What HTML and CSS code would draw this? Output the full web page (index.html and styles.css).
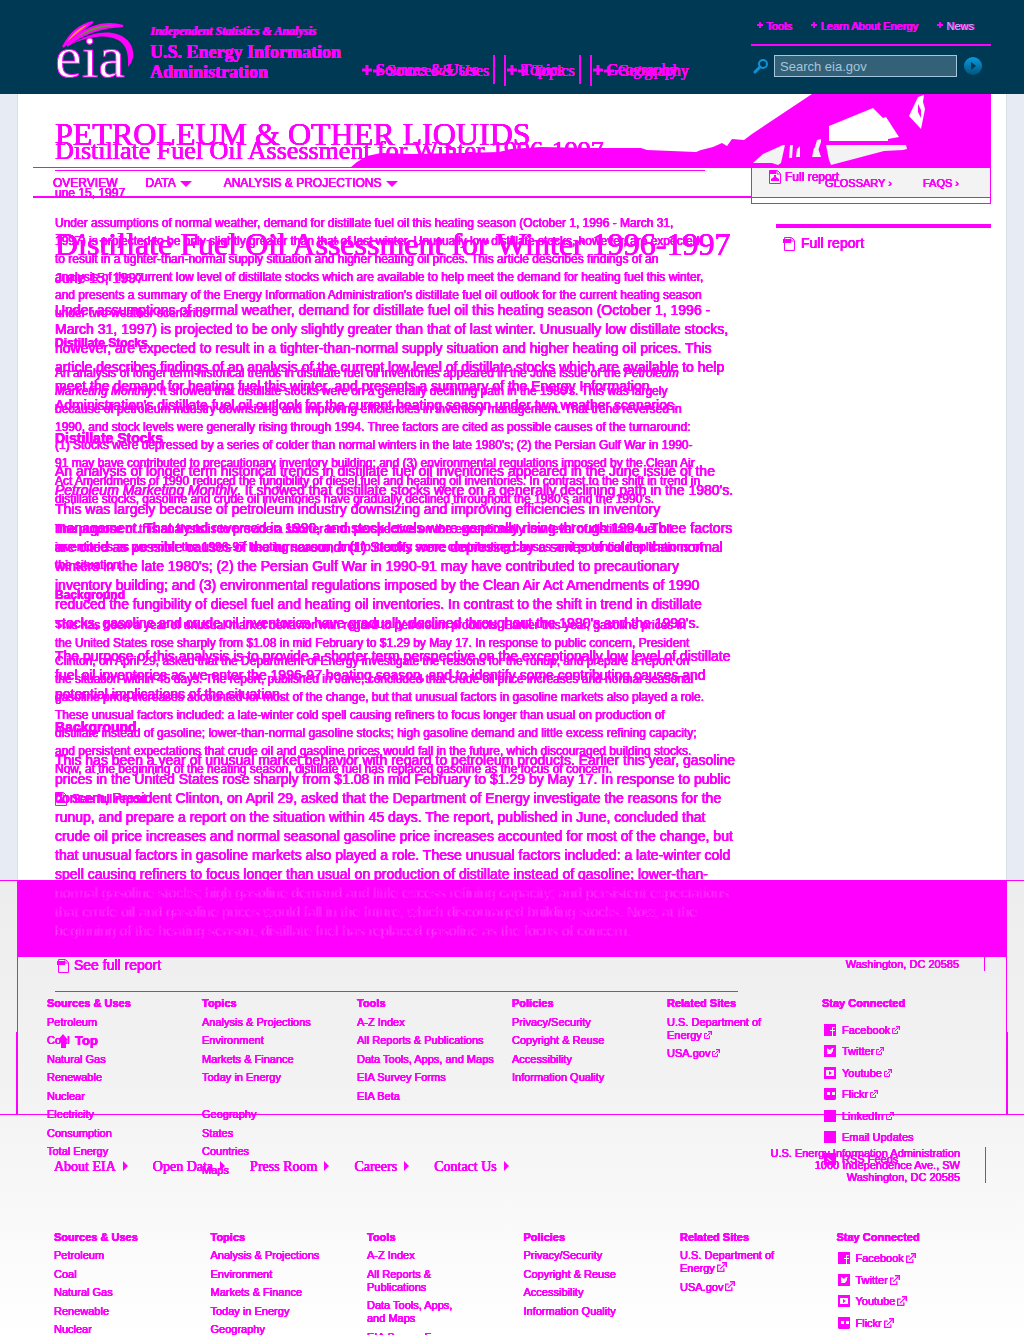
FILE: index.html
```html
<!DOCTYPE html>
<html lang="en">
<head>
<meta charset="utf-8">
<title>Distillate Fuel Oil Assessment for Winter 1996-1997</title>
<link rel="stylesheet" href="styles.css">
</head>
<body>
<svg class="sprite" aria-hidden="true">
  <symbol id="plus" viewBox="0 0 10 10"><path d="M3.500 0h3v3.500H10v3H6.500V10h-3V6.500H0v-3h3.500z"/></symbol>
  <symbol id="doc" viewBox="0 0 12 14"><path d="M1.500 .5h7l3 3v10h-10zM8 1v3h3" fill="none" stroke="currentColor"/><path d="M0 2h8v4H0z"/></symbol>
  <symbol id="pdf" viewBox="0 0 12 14"><path d="M.5 .5h8l3 3v10H.5zM8 1v3h3" fill="none" stroke="currentColor"/><path d="M1 1h6v3H1zM2 11V9l3-2V5h2v2l3 2v2z"/></symbol>
  <symbol id="ext" viewBox="0 0 8 8"><path d="M3 2.500H.5v5h5V5M2.500 5.500L6.500 1.500" fill="none" stroke="currentColor"/><path d="M4 0h4v4H6.800V1.200H4z"/></symbol>
  <symbol id="fb" viewBox="0 0 12 12"><path d="M0 0h12v12H9V7h2V6H9V4h2V3H8v3H6v1h2v5H0z"/></symbol>
  <symbol id="tw" viewBox="0 0 12 12"><path fill-rule="evenodd" d="M0 0h12v12H0zM3 3v4l1 1H3v1h4l2-3V4l1-1H8L6 5z"/></symbol>
  <symbol id="yt" viewBox="0 0 12 12"><path fill-rule="evenodd" d="M0 0h12v12H0zM2 3v6h8V3z"/><path d="M5 4l3 2-3 2z"/></symbol>
  <symbol id="fl" viewBox="0 0 12 12"><path fill-rule="evenodd" d="M0 0h12v11l-1 1H1l-1-1zM3 4v3h3V4zM8 4v3h3V4z"/></symbol>
  <symbol id="li" viewBox="0 0 12 12"><path d="M0 0h12v12H0z"/></symbol>
  <symbol id="rss" viewBox="0 0 12 12"><path fill-rule="evenodd" d="M0 0h12v12H0zM3 4v1l4 4h1V8zM3 8v1h1V8z"/></symbol>
</svg>

<div class="stage">
  <div class="backdrop" aria-hidden="true">
    <div class="bd-header"></div>
    <div class="bd-page"><div class="bd-sheet"></div></div>
    <div class="bd-band"></div>
    <div class="bd-foot"><div class="bd-foot-line"></div><div class="bd-foot-edge"></div></div>
    <div class="bd-end"></div>
  </div>

  <div class="layer">
    <header class="top">
      <a class="brand" href="#">
        <svg class="logo" viewBox="0 0 80 60" role="img" aria-label="eia">
          <path d="M8 25C14 13 24 3 38 0C27 8 18 15 8 25z" fill="#ff9a2e" stroke="#f0f" stroke-width="2"/>
          <path d="M12 24C26 7 46-2 68 4C46 5 28 11 12 24z" fill="#5d9732" stroke="#f0f" stroke-width="2"/>
          <path d="M13 24C30 13 46 9 57 11C72 13 80 24 78 36Q77 41 73 45C74 28 70 18 54 15C42 13 26 17 13 24z" fill="#f0f"/>
          <text x="0" y="55" class="logo-word">eia</text>
        </svg>
        <span class="brand-text"><em>Independent Statistics &amp; Analysis</em><strong>U.S. Energy Information<br>Administration</strong></span>
      </a>
      <nav class="mainnav first">
        <a href="#"><svg><use href="#plus"/></svg>Sources &amp; Uses</a>
        <a href="#"><svg><use href="#plus"/></svg>Topics</a>
        <a href="#"><svg><use href="#plus"/></svg>Geography</a>
      </nav>
      <div class="utility">
        <nav class="tools">
          <a href="#"><svg><use href="#plus"/></svg>Tools</a>
          <a href="#"><svg><use href="#plus"/></svg>Learn About Energy</a>
          <a class="pale" href="#"><svg><use href="#plus"/></svg>News</a>
        </nav>
        <form class="search">
          <svg class="lens" viewBox="0 0 16 16"><circle cx="10" cy="6" r="4" fill="none" stroke="#0f93d6" stroke-width="2"/><path d="M7 9l-5 5" stroke="#0f93d6" stroke-width="3" stroke-linecap="round"/></svg>
          <input type="text" placeholder="Search eia.gov" aria-label="Search eia.gov">
          <button type="button" aria-label="Search"><svg viewBox="0 0 18 18"><path d="M7 5l5 4-5 4z" fill="#003953"/></svg></button>
        </form>
      </div>
    </header>
    <div class="columns small">
      <main>
        <h1>Distillate Fuel Oil Assessment for Winter 1996-1997</h1>
        <div class="date">une 15, 1997</div>
        <p>Under assumptions of normal weather, demand for distillate fuel oil this heating season (October 1, 1996 - March 31,<br>1997) is projected to be only slightly greater than that of last winter. Unusually low distillate stocks, however, are expected<br>to result in a tighter-than-normal supply situation and higher heating oil prices. This article describes findings of an<br>analysis of the current low level of distillate stocks which are available to help meet the demand for heating fuel this winter,<br>and presents a summary of the Energy Information Administration's distillate fuel oil outlook for the current heating season<br>under two weather scenarios</p>
        <h2>Distillate Stocks</h2>
        <p>An analysis of longer term historical trends in distillate fuel oil inventories appeared in the June issue of the <i>Petroleum<br>Marketing Monthly</i>. It showed that distillate stocks were on a generally declining path in the 1980's. This was largely<br>because of petroleum industry downsizing and improving efficiencies in inventory management. That trend reversed in<br>1990, and stock levels were generally rising through 1994. Three factors are cited as possible causes of the turnaround:<br>(1) Stocks were depressed by a series of colder than normal winters in the late 1980's; (2) the Persian Gulf War in 1990-<br>91 may have contributed to precautionary inventory building; and (3) environmental regulations imposed by the Clean Air<br>Act Amendments of 1990 reduced the fungibility of diesel fuel and heating oil inventories. In contrast to the shift in trend in<br>distillate stocks, gasoline and crude oil inventories have gradually declined throughout the 1980's and the 1990's.</p>
        <p>The purpose of this analysis is to provide a shorter term perspective on the exceptionally low level of distillate fuel oil<br>inventories as we enter the 1996-97 heating season, and to identify some contributing causes and potential implications of<br>the situation.</p>
        <h2>Background</h2>
        <p>This has been a year of unusual market behavior with regard to petroleum products. Earlier this year, gasoline prices in<br>the United States rose sharply from $1.08 in mid February to $1.29 by May 17. In response to public concern, President<br>Clinton, on April 29, asked that the Department of Energy investigate the reasons for the runup, and prepare a report on<br>the situation within 45 days. The report, published in June, concluded that crude oil price increases and normal seasonal<br>gasoline price increases accounted for most of the change, but that unusual factors in gasoline markets also played a role.<br>These unusual factors included: a late-winter cold spell causing refiners to focus longer than usual on production of<br>distillate instead of gasoline; lower-than-normal gasoline stocks; high gasoline demand and little excess refining capacity;<br>and persistent expectations that crude oil and gasoline prices would fall in the future, which discouraged building stocks.<br>Now, at the beginning of the heating season, distillate fuel has replaced gasoline as the focus of concern.</p>
        <a class="report" href="#"><svg><use href="#pdf"/></svg>See full report</a>
      </main>
      <aside>
        <div class="panel"><a class="report" href="#"><svg><use href="#pdf"/></svg>Full report</a></div>
        <div class="panel-foot"></div>
      </aside>
    </div>
    <footer class="foot first">
      <address class="short">Washington, DC 20585</address>
      <div class="links">
        <section><h3>Sources &amp; Uses</h3><ul><li><a href="#">Petroleum</a></li><li><a href="#">Coal</a></li><li><a href="#">Natural Gas</a></li><li><a href="#">Renewable</a></li><li><a href="#">Nuclear</a></li><li><a href="#">Electricity</a></li><li><a href="#">Consumption</a></li><li><a href="#">Total Energy</a></li></ul></section>
        <section><h3>Topics</h3><ul><li><a href="#">Analysis &amp; Projections</a></li><li><a href="#">Environment</a></li><li><a href="#">Markets &amp; Finance</a></li><li><a href="#">Today in Energy</a></li><li>&nbsp;</li><li><a href="#">Geography</a></li><li><a href="#">States</a></li><li><a href="#">Countries</a></li><li><a href="#">Maps</a></li></ul></section>
        <section><h3>Tools</h3><ul><li><a href="#">A-Z Index</a></li><li><a href="#">All Reports &amp; Publications</a></li><li><a href="#">Data Tools, Apps, and Maps</a></li><li><a href="#">EIA Survey Forms</a></li><li><a href="#">EIA Beta</a></li></ul></section>
        <section><h3>Policies</h3><ul><li><a href="#">Privacy/Security</a></li><li><a href="#">Copyright &amp; Reuse</a></li><li><a href="#">Accessibility</a></li><li><a href="#">Information Quality</a></li></ul></section>
        <section><h3>Related Sites</h3><ul><li><a href="#">U.S. Department of<br>Energy<svg class="ext"><use href="#ext"/></svg></a></li><li><a href="#">USA.gov<svg class="ext"><use href="#ext"/></svg></a></li></ul></section>
        <section><h3>Stay Connected</h3><ul class="social">
          <li><a href="#"><svg><use href="#fb"/></svg>Facebook<svg class="ext"><use href="#ext"/></svg></a></li>
          <li><a href="#"><svg><use href="#tw"/></svg>Twitter<svg class="ext"><use href="#ext"/></svg></a></li>
          <li><a href="#"><svg><use href="#yt"/></svg>Youtube<svg class="ext"><use href="#ext"/></svg></a></li>
          <li><a href="#"><svg><use href="#fl"/></svg>Flickr<svg class="ext"><use href="#ext"/></svg></a></li>
          <li><a href="#"><svg><use href="#li"/></svg>LinkedIn<svg class="ext"><use href="#ext"/></svg></a></li>
          <li><a href="#"><svg><use href="#li"/></svg>Email Updates</a></li>
          <li><a href="#"><svg><use href="#rss"/></svg>RSS Feeds</a></li>
        </ul></section>
      </div>
    </footer>
  </div>

  <div class="layer">
    <header class="top">
      <nav class="mainnav second">
        <a href="#"><svg><use href="#plus"/></svg>Sources &amp; Uses</a>
        <a href="#"><svg><use href="#plus"/></svg>Topics</a>
        <a href="#"><svg><use href="#plus"/></svg>Geography</a>
      </nav>
    </header>
    <div class="hero">
      <svg class="skyline" viewBox="0 0 640 73" aria-hidden="true">
        <path fill-rule="evenodd" d="M0 73L6 68L16 62L30 59L60 60L110 59L148 58L160 55L190 53L238 54L290 54L296 56L345 58L350 56L362 53L371 49L376 52L381 45L393 46L401 40L461 0H640V73z
        M478 32V47H537V45L548 43L535 23L532 24L522 14z"/>
        <g fill="#f3f3f3">
          <path d="M475 51H555L556 55L552 56L533 57L480 71L478 66z"/>
          <path d="M402 69L412 60L432 51H434L430 69L427 71L421 69z"/>
          <path d="M439 51h3l-1 13h-3zM446 55l3-3v11h-4zM466 46l4-1v3l-5 15h-4zM463 54h4l3 9h-9z"/>
        </g>
        <path d="M558 22L567 3L573 1L572 8L574 15L570 35z" fill="#fff"/>
        <path d="M567 10l3 6v8l-3-6z"/>
      </svg>
      <div class="hero-title">PETROLEUM &amp; OTHER LIQUIDS</div>
    </div>
    <nav class="subnav">
      <div class="subnav-main"><a href="#">OVERVIEW</a><a href="#">DATA<i class="caret"></i></a><a href="#">ANALYSIS &amp; PROJECTIONS<i class="caret"></i></a></div>
      <div class="subnav-side"><a href="#">GLOSSARY ›</a><a href="#">FAQS ›</a></div>
    </nav>
    <div class="columns large">
      <main>
        <h1>Distillate Fuel Oil Assessment for Winter 1996-1997</h1>
        <div class="date">June 15, 1997</div>
        <p>Under assumptions of normal weather, demand for distillate fuel oil this heating season (October 1, 1996 -<br>March 31, 1997) is projected to be only slightly greater than that of last winter. Unusually low distillate stocks,<br>however, are expected to result in a tighter-than-normal supply situation and higher heating oil prices. This<br>article describes findings of an analysis of the current low level of distillate stocks which are available to help<br>meet the demand for heating fuel this winter, and presents a summary of the Energy Information<br>Administration's distillate fuel oil outlook for the current heating season under two weather scenarios.</p>
        <h2>Distillate Stocks</h2>
        <p>An analysis of longer term historical trends in distillate fuel oil inventories appeared in the June issue of the<br><i>Petroleum Marketing Monthly</i>. It showed that distillate stocks were on a generally declining path in the 1980's.<br>This was largely because of petroleum industry downsizing and improving efficiencies in inventory<br>management. That trend reversed in 1990, and stock levels were generally rising through 1994. Three factors<br>are cited as possible causes of the turnaround: (1) Stocks were depressed by a series of colder than normal<br>winters in the late 1980's; (2) the Persian Gulf War in 1990-91 may have contributed to precautionary<br>inventory building; and (3) environmental regulations imposed by the Clean Air Act Amendments of 1990<br>reduced the fungibility of diesel fuel and heating oil inventories. In contrast to the shift in trend in distillate<br>stocks, gasoline and crude oil inventories have gradually declined throughout the 1980's and the 1990's.</p>
        <p>The purpose of this analysis is to provide a shorter term perspective on the exceptionally low level of distillate<br>fuel oil inventories as we enter the 1996-97 heating season, and to identify some contributing causes and<br>potential implications of the situation.</p>
        <h2>Background</h2>
        <p>This has been a year of unusual market behavior with regard to petroleum products. Earlier this year, gasoline<br>prices in the United States rose sharply from $1.08 in mid February to $1.29 by May 17. In response to public<br>concern, President Clinton, on April 29, asked that the Department of Energy investigate the reasons for the<br>runup, and prepare a report on the situation within 45 days. The report, published in June, concluded that<br>crude oil price increases and normal seasonal gasoline price increases accounted for most of the change, but<br>that unusual factors in gasoline markets also played a role. These unusual factors included: a late-winter cold<br>spell causing refiners to focus longer than usual on production of distillate instead of gasoline; lower-than-<br><span class="faint">normal gasoline stocks; high gasoline demand and little excess refining capacity; and persistent expectations<br>that crude oil and gasoline prices would fall in the future, which discouraged building stocks. Now, at the<br>beginning of the heating season, distillate fuel has replaced gasoline as the focus of concern.</span></p>
        <a class="report" href="#"><svg><use href="#doc"/></svg>See full report</a>
        <a class="to-top" href="#"><svg viewBox="0 0 10 14"><path d="M5 0l5 6H8v8H3V6H0z"/></svg>Top</a>
      </main>
      <aside><a class="report" href="#"><svg><use href="#doc"/></svg>Full report</a></aside>
    </div>
    <footer class="foot second">
      <div class="foot-bar">
        <nav class="foot-nav"><a href="#">About EIA</a><a href="#">Open Data</a><a href="#">Press Room</a><a href="#">Careers</a><a href="#">Contact Us</a></nav>
        <address>U.S. Energy Information Administration<br>1000 Independence Ave., SW<br>Washington, DC 20585</address>
      </div>
      <div class="links">
        <section><h3>Sources &amp; Uses</h3><ul><li><a href="#">Petroleum</a></li><li><a href="#">Coal</a></li><li><a href="#">Natural Gas</a></li><li><a href="#">Renewable</a></li><li><a href="#">Nuclear</a></li></ul></section>
        <section><h3>Topics</h3><ul><li><a href="#">Analysis &amp; Projections</a></li><li><a href="#">Environment</a></li><li><a href="#">Markets &amp; Finance</a></li><li><a href="#">Today in Energy</a></li><li><a href="#">Geography</a></li></ul></section>
        <section><h3>Tools</h3><ul><li><a href="#">A-Z Index</a></li><li><a href="#">All Reports &amp;<br>Publications</a></li><li><a href="#">Data Tools, Apps,<br>and Maps</a></li><li><a href="#">EIA Survey Forms</a></li></ul></section>
        <section><h3>Policies</h3><ul><li><a href="#">Privacy/Security</a></li><li><a href="#">Copyright &amp; Reuse</a></li><li><a href="#">Accessibility</a></li><li><a href="#">Information Quality</a></li></ul></section>
        <section><h3>Related Sites</h3><ul><li><a href="#">U.S. Department of<br>Energy<svg class="ext"><use href="#ext"/></svg></a></li><li><a href="#">USA.gov<svg class="ext"><use href="#ext"/></svg></a></li></ul></section>
        <section><h3>Stay Connected</h3><ul class="social">
          <li><a href="#"><svg><use href="#fb"/></svg>Facebook<svg class="ext"><use href="#ext"/></svg></a></li>
          <li><a href="#"><svg><use href="#tw"/></svg>Twitter<svg class="ext"><use href="#ext"/></svg></a></li>
          <li><a href="#"><svg><use href="#yt"/></svg>Youtube<svg class="ext"><use href="#ext"/></svg></a></li>
          <li><a href="#"><svg><use href="#fl"/></svg>Flickr<svg class="ext"><use href="#ext"/></svg></a></li>
        </ul></section>
      </div>
    </footer>
  </div>
</div>
</body>
</html>
```
FILE: styles.css
```css
* { box-sizing: border-box; }
body {
  margin: 0;
  color: #f0f;
  font-family: "Liberation Sans", Arial, sans-serif;
  background: #fff;
}
a { color: inherit; text-decoration: none; }
h1, h2, h3, p, ul { margin: 0; padding: 0; }
ul { list-style: none; }
address { font-style: normal; }
svg { fill: currentColor; flex: none; }
.sprite { display: none; }

/* Two page versions share one grid cell above the backdrop */
.stage { display: grid; height: 100vh; overflow: hidden; }
.layer, .backdrop { grid-area: 1 / 1; min-width: 0; text-shadow: 0 0 0 #f0f, 0 0 0 #f0f, 0 0 0 #f0f, 0 0 0 #f0f; }

.backdrop { display: flex; flex-direction: column; height: 100vh; background: linear-gradient(#ededed 880px, #f3f3f3 1100px, #fff 1335px); }
.bd-header { height: 94px; background: #003953; }
.bd-page { height: 787px; padding: 0 17px; background: #e7ebf4; border-bottom: 1px solid #f0f; }
.bd-sheet { height: 100%; background: #fff; border: 1px solid #d9dfe2; border-width: 0 1px; }
.bd-band { height: 76px; margin: 0 17px; background: #f0f; }
.bd-foot { margin: 0 16px; height: 157px; }
.bd-foot-line { height: 75px; margin: 0 1px; border: solid #f0f; border-width: 0 1px; }
.bd-foot-edge { height: 82px; border: solid #f0f; border-width: 0 2px; }
.bd-end { border-top: 1px solid #f0f; }

/* Header */
.top { display: flex; height: 94px; padding-right: 33px; }
.brand { display: flex; width: 362px; padding: 22px 0 0 55px; }
.logo { width: 80px; height: 60px; margin-right: 15px; overflow: visible; }
.logo-word { font: 60px "Liberation Serif", serif; fill: #fff; stroke: #f0f; text-shadow: none; }
.brand-text { font-family: "Liberation Serif", serif; white-space: nowrap; }
.brand-text em { display: block; font-size: 12px; line-height: 18px; font-weight: bold; text-shadow: 1px 0 #f0f; }
.brand-text strong { display: block; font-size: 18px; line-height: 20px; margin-top: 2px; }
.mainnav { display: flex; align-items: flex-start; padding-top: 55px; font: 16px/30px "Liberation Serif", serif; white-space: nowrap; }
.mainnav svg { width: 10px; height: 10px; margin-right: 4px; }
.mainnav a { padding: 0 15px 0 12px; height: 29px; border-right: 2px solid #f0f; }
.mainnav a:first-child { padding-left: 0; }
.mainnav a:last-child { border: 0; }
.mainnav.second { padding-left: 373px; line-height: 32px; }
.mainnav.second a { height: 31px; }
.utility { width: 240px; margin-left: auto; padding-top: 19px; }
.tools { display: flex; justify-content: space-between; padding: 0 17px 11px 6px; border-bottom: 2px solid #f0f; font-size: 11px; line-height: 14px; text-shadow: 0 0 0 #f0f, 1px 0 #f0f; }
.tools svg { width: 6px; height: 6px; margin: 0 3px 2px 0; }
.tools .pale { color: #a5c6dc; }
.tools .pale svg { color: #f0f; }
.search { display: flex; align-items: center; margin-top: 9px; text-shadow: none; }
.lens { width: 16px; height: 16px; margin: 0 5px 0 2px; }
.search input { width: 183px; height: 22px; padding: 0 5px; border: 1px solid #a5c6dc; background: #336178; color: #fff; font: 13px "Liberation Sans", Arial, sans-serif; }
.search input::placeholder { color: #a5c6dc; opacity: 1; }
.search button { width: 18px; height: 18px; margin-left: 7px; padding: 0; border: 0; border-radius: 9px; background: linear-gradient(#0a9be0, #00557d); }
.search button svg { display: block; width: 18px; height: 18px; }

/* Banner and section menu */
.hero { display: grid; height: 74px; margin: 0 33px; border-bottom: 1px solid #f0f; }
.hero > * { grid-area: 1 / 1; }
.skyline { width: 640px; height: 73px; justify-self: end; }
.hero-title { padding: 22px 0 0 22px; font: 32px/36px "Liberation Serif", serif; white-space: nowrap; }
.subnav { display: flex; margin: 0 33px; height: 30px; font-size: 12px; line-height: 30px; }
.subnav-main { flex: 1; display: flex; gap: 28px; padding-left: 20px; border-bottom: 2px solid #f0f; }
.subnav-main a:last-child { padding-left: 4px; }
.caret { display: inline-block; margin-left: 4px; border: 6px solid transparent; border-top-color: #f0f; border-bottom: 0; }
.subnav-side { width: 240px; display: flex; justify-content: flex-end; gap: 31px; padding-right: 32px; font-size: 11px; }

/* Article columns */
.columns { display: grid; justify-content: space-between; padding: 0 33px 0 55px; }
.columns main { white-space: nowrap; }
.columns h1 { font-family: "Liberation Serif", serif; font-weight: normal; }
.report { display: flex; align-items: center; gap: 6px; }
.report svg { width: 12px; height: 14px; }

.small { grid-template-columns: minmax(0, 650px) 240px; font-size: 12px; line-height: 18px; }
.small h1 { margin-top: 42px; padding-bottom: 4px; font-size: 26px; line-height: 30px; border-bottom: 1px solid #f0f; }
.small .date { margin-top: 13px; }
.small h2 { font-size: 12px; }
.small h2, .small p, .small main .report { margin-top: 12px; }
.small main .report { gap: 5px; }
.panel { height: 54px; margin-top: 50px; padding: 24px 0 0 17px; background: #f3f3f3; border: 1px solid #f0f; border-top: 0; }
.panel .report { gap: 4px; }
.panel-foot { height: 6px; border: 1px solid #f0f; border-top: 0; }

.large { grid-template-columns: minmax(0, 683px) 215px; font-size: 14px; line-height: 19px; }
.large h1 { margin-top: 28px; font-size: 32px; line-height: 36px; }
.large .date { margin: 7px 0 13px; }
.large h2 { font-size: 14px; }
.large h2, .large p { margin-bottom: 14px; }
.large main .report { margin-top: 15px; padding-bottom: 16px; border-bottom: 1px solid #f0f; gap: 5px; padding-left: 2px; }
.faint { color: #fff; text-shadow: none; -webkit-text-stroke: 1px #f0f; }
.large aside { padding-top: 26px; }
.large aside .report { border-top: 4px solid #f0f; padding: 6px 0 0 7px; }
.to-top { display: flex; align-items: center; gap: 7px; margin: 40px 0 0 3px; font-size: 13px; line-height: 18px; font-weight: bold; }
.to-top svg { width: 10px; height: 14px; }

/* Footers */
.foot { font-size: 11px; line-height: 13px; }
.foot.first { margin-top: 149px; padding: 0 39px 0 47px; }
.foot.second { margin-top: 97px; padding: 0 31px 0 54px; }
.foot .short { padding-right: 25px; border-right: 1px solid #f0f; line-height: 14px; text-align: right; }
.foot.first .links { margin: 26px 8px 0 0; }
.foot.second .links { margin-top: 48px; }
.links { display: grid; grid-template-columns: repeat(6, 1fr); white-space: nowrap; }
.links h3 { font-size: 11px; margin-bottom: 6px; }
.foot.second h3 { margin-bottom: 5px; }
.links li { margin-bottom: 5px; }
.links li:nth-child(even) { margin-bottom: 6px; }
.foot.second .links li { margin-bottom: 6px; }
.foot.second .links li:nth-child(even) { margin-bottom: 5px; }
.ext { width: 8px; height: 8px; margin-left: 2px; }
.foot.second .ext { width: 10px; height: 10px; }
.social { padding-top: 6px; }
.foot.second .social { padding-top: 1px; }
.social li { height: 16px; }
.social a { display: flex; align-items: center; gap: 6px; height: 16px; padding-left: 2px; }
.foot.second .social a { padding-left: 1px; }
.social svg { width: 12px; height: 12px; }
.social .ext { margin-left: -4px; width: 8px; height: 8px; }
.foot-bar { display: flex; justify-content: space-between; align-items: center; padding-right: 7px; }
.foot-nav { display: flex; gap: 25px; padding-top: 3px; font: 14px/18px "Liberation Serif", serif; }
.foot-nav a::after { content: ""; display: inline-block; margin-left: 7px; border: 5px solid transparent; border-left-color: #f0f; border-right: 0; }
.foot-bar address { padding-right: 25px; border-right: 1px solid #f0f; text-align: right; line-height: 12px; }
```
